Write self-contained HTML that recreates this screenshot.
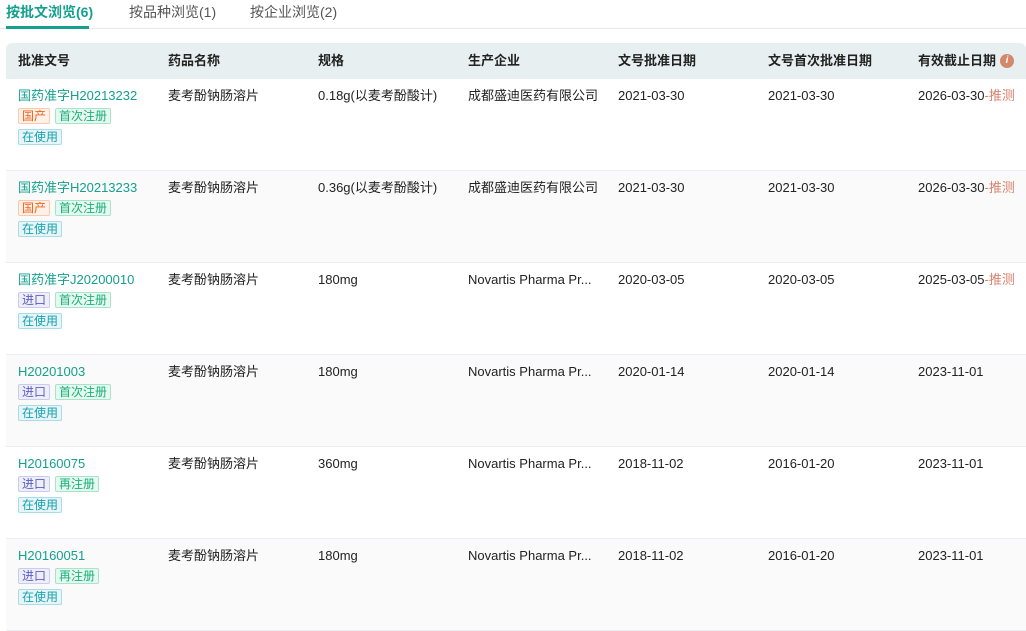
<!DOCTYPE html>
<html><head><meta charset="utf-8"><style>
*{margin:0;padding:0;box-sizing:border-box}
body{width:1026px;height:613px;overflow:hidden;background:#fff;font-family:"Liberation Sans","Noto Sans CJK SC",sans-serif;font-size:13px;color:#222}
.tabs{position:absolute;left:0;top:0;width:1026px;height:29px;border-bottom:1px solid #e8e8e8}
.tab{position:absolute;top:3px;font-size:14px;line-height:18px;color:#555}
.tab.a{color:#14a08f;font-weight:bold}
.ul{position:absolute;left:6px;top:26px;width:83px;height:3px;background:#14a08f}
.head{position:absolute;left:6px;top:43px;width:1020px;height:36px;background:#e7eff0;border-radius:6px 6px 0 0;font-weight:bold;font-size:13px}
.c{position:absolute;line-height:16px;white-space:nowrap}
.head .c{top:10px}
.row{position:absolute;left:6px;width:1020px;height:92px;border-bottom:1px solid #ececf3}
.row .c{top:9px}
.no{color:#14a08f}
.tag{position:absolute;font-size:12px;height:16px;line-height:14px;padding:0 3px;border:1px solid;border-radius:2px}
.gc{color:#f0641e;background:#fff0e8;border-color:#fcc9ad}
.jk{color:#5b5fb8;background:#eeeefa;border-color:#c9cbef}
.sc{color:#18b079;background:#e7f8f0;border-color:#a5e6ca}
.zy{color:#1aa0b0;background:#e5f5f8;border-color:#a9dde5}
.ts{color:#d9826a}
.i{position:absolute;left:1000px;top:11px;width:14px;height:14px;border-radius:50%;background:#d4876a;color:#fff;font-size:10px;font-style:italic;text-align:center;line-height:14px}
</style></head><body>
<div class="tabs">
<span class="tab a" style="left:6px">按批文浏览(6)</span>
<span class="tab" style="left:129px">按品种浏览(1)</span>
<span class="tab" style="left:250px">按企业浏览(2)</span>
<div class="ul"></div></div>
<div class="head">
<span class="c" style="left:12px">批准文号</span>
<span class="c" style="left:162px">药品名称</span>
<span class="c" style="left:312px">规格</span>
<span class="c" style="left:462px">生产企业</span>
<span class="c" style="left:612px">文号批准日期</span>
<span class="c" style="left:762px">文号首次批准日期</span>
<span class="c" style="left:912px">有效截止日期</span><span class="i" style="left:994px">i</span>
</div>

<div class="row" style="top:79px;background:#fff">
<span class="c no" style="left:12px">国药准字H20213232</span>
<span class="tag gc" style="left:12px;top:29px">国产</span><span class="tag sc" style="left:49px;top:29px">首次注册</span>
<span class="tag zy" style="left:12px;top:50px">在使用</span>
<span class="c" style="left:162px">麦考酚钠肠溶片</span><span class="c" style="left:312px">0.18g(以麦考酚酸计)</span><span class="c" style="left:462px">成都盛迪医药有限公司</span><span class="c" style="left:612px">2021-03-30</span><span class="c" style="left:762px">2021-03-30</span><span class="c" style="left:912px">2026-03-30<span class="ts">-推测</span></span>
</div>
<div class="row" style="top:171px;background:#fafafa">
<span class="c no" style="left:12px">国药准字H20213233</span>
<span class="tag gc" style="left:12px;top:29px">国产</span><span class="tag sc" style="left:49px;top:29px">首次注册</span>
<span class="tag zy" style="left:12px;top:50px">在使用</span>
<span class="c" style="left:162px">麦考酚钠肠溶片</span><span class="c" style="left:312px">0.36g(以麦考酚酸计)</span><span class="c" style="left:462px">成都盛迪医药有限公司</span><span class="c" style="left:612px">2021-03-30</span><span class="c" style="left:762px">2021-03-30</span><span class="c" style="left:912px">2026-03-30<span class="ts">-推测</span></span>
</div>
<div class="row" style="top:263px;background:#fff">
<span class="c no" style="left:12px">国药准字J20200010</span>
<span class="tag jk" style="left:12px;top:29px">进口</span><span class="tag sc" style="left:49px;top:29px">首次注册</span>
<span class="tag zy" style="left:12px;top:50px">在使用</span>
<span class="c" style="left:162px">麦考酚钠肠溶片</span><span class="c" style="left:312px">180mg</span><span class="c" style="left:462px">Novartis Pharma Pr...</span><span class="c" style="left:612px">2020-03-05</span><span class="c" style="left:762px">2020-03-05</span><span class="c" style="left:912px">2025-03-05<span class="ts">-推测</span></span>
</div>
<div class="row" style="top:355px;background:#fafafa">
<span class="c no" style="left:12px">H20201003</span>
<span class="tag jk" style="left:12px;top:29px">进口</span><span class="tag sc" style="left:49px;top:29px">首次注册</span>
<span class="tag zy" style="left:12px;top:50px">在使用</span>
<span class="c" style="left:162px">麦考酚钠肠溶片</span><span class="c" style="left:312px">180mg</span><span class="c" style="left:462px">Novartis Pharma Pr...</span><span class="c" style="left:612px">2020-01-14</span><span class="c" style="left:762px">2020-01-14</span><span class="c" style="left:912px">2023-11-01</span>
</div>
<div class="row" style="top:447px;background:#fff">
<span class="c no" style="left:12px">H20160075</span>
<span class="tag jk" style="left:12px;top:29px">进口</span><span class="tag sc" style="left:49px;top:29px">再注册</span>
<span class="tag zy" style="left:12px;top:50px">在使用</span>
<span class="c" style="left:162px">麦考酚钠肠溶片</span><span class="c" style="left:312px">360mg</span><span class="c" style="left:462px">Novartis Pharma Pr...</span><span class="c" style="left:612px">2018-11-02</span><span class="c" style="left:762px">2016-01-20</span><span class="c" style="left:912px">2023-11-01</span>
</div>
<div class="row" style="top:539px;background:#fafafa">
<span class="c no" style="left:12px">H20160051</span>
<span class="tag jk" style="left:12px;top:29px">进口</span><span class="tag sc" style="left:49px;top:29px">再注册</span>
<span class="tag zy" style="left:12px;top:50px">在使用</span>
<span class="c" style="left:162px">麦考酚钠肠溶片</span><span class="c" style="left:312px">180mg</span><span class="c" style="left:462px">Novartis Pharma Pr...</span><span class="c" style="left:612px">2018-11-02</span><span class="c" style="left:762px">2016-01-20</span><span class="c" style="left:912px">2023-11-01</span>
</div>
</body></html>
